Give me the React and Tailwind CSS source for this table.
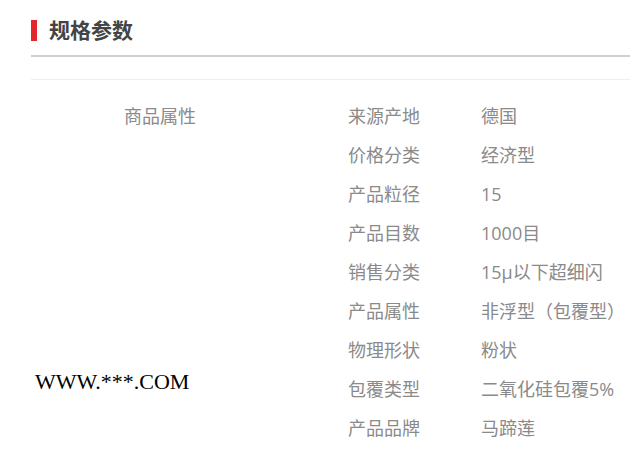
import React from "react";

const specs = [
  ["来源产地", "德国"],
  ["价格分类", "经济型"],
  ["产品粒径", "15"],
  ["产品目数", "1000目"],
  ["销售分类", "15μ以下超细闪"],
  ["产品属性", "非浮型（包覆型）"],
  ["物理形状", "粉状"],
  ["包覆类型", "二氧化硅包覆5%"],
  ["产品品牌", "马蹄莲"],
];

const cjk = { fontFamily: '"Open Sans", "Noto Sans CJK SC", sans-serif' };

export default function App() {
  return (
    <div className="relative h-[474px] w-[630px] overflow-hidden bg-white pl-[31px]" style={cjk}>
      {/* header */}
      <div className="flex h-[55px] items-center pt-[5px]">
        <div className="h-[21px] w-[6px] bg-[#e4262b]" />
        <h2 className="ml-[12px] text-[21px] font-bold leading-none text-[#444]">规格参数</h2>
      </div>
      <div className="h-[2px] bg-[#cfcfcf]" />
      <div className="mt-[22px] h-px bg-[#eeeeee]" />

      {/* spec table */}
      <div className="flex pt-[17px] text-[18px] text-[#8a8a8a]">
        <div className="w-[258px] text-center leading-[39px]">商品属性</div>
        <div className="ml-[59px] flex flex-col">
          {specs.map(([k, v]) => (
            <div key={k} className="flex h-[39px] items-center">
              <span className="w-[133px]">{k}</span>
              <span>{v}</span>
            </div>
          ))}
        </div>
      </div>

      {/* watermark */}
      <div
        className="absolute left-[35px] top-[371px] text-[22px] leading-none text-black"
        style={{ fontFamily: '"Liberation Serif", serif' }}
      >
        WWW.***.COM
      </div>
    </div>
  );
}
